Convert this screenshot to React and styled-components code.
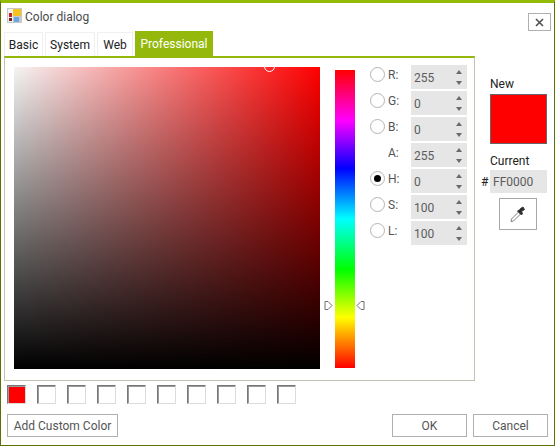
import styled, { createGlobalStyle } from "styled-components";

const GlobalStyle = createGlobalStyle`
   html, body {
      margin: 0;
      padding: 0;
      background: #ffffff;
   }
   * {
      box-sizing: border-box;
   }
`

const Window = styled.div`
   width: 555px;
   height: 446px;
   display: flex;
   flex-direction: column;
   background: #ffffff;
   border: 1px solid #5a7000;
   border-top: 3px solid #94bb06;
   font-family: "Roboto", "Noto Sans", sans-serif;
   font-size: 12px;
   color: #333333;
`

const TitleBar = styled.div`
   height: 28px;
   display: flex;
   align-items: flex-start;
   padding: 5px 3px 0 6px;
`

const TitleText = styled.span`
   margin-left: 3px;
   line-height: 18px;
   color: #4a4a4a;
`

const CloseButton = styled.button`
   width: 23px;
   height: 18px;
   margin: 5px 0 0 auto;
   padding: 0;
   display: flex;
   align-items: center;
   justify-content: center;
   background: #ffffff;
   border: 1px solid #b0b0b0;
`

const Body = styled.div`
   display: flex;
   padding-left: 3px;
`

const MainColumn = styled.div`
   width: 471px;
`

const TabStrip = styled.div`
   height: 25px;
   display: flex;
   align-items: flex-end;
`

const Tab = styled.div`
   width: ${props => props.width}px;
   height: ${props => props.active ? 25 : 24}px;
   margin-right: ${props => props.active ? 0 : 2}px;
   display: flex;
   align-items: center;
   justify-content: center;
   background: ${props => props.active ? "#94b80b" : "#ffffff"};
   color: ${props => props.active ? "#ffffff" : "#222222"};
   border: ${props => props.active ? "none" : "1px solid #f0f0f0"};
   border-bottom: none;
`

const Panel = styled.div`
   height: 325px;
   display: flex;
   align-items: flex-start;
   padding: 7px 0 0 9px;
   border: 1px solid #c2c4b2;
   border-top: 2px solid #94b80b;
`

const SpectrumBox = styled.div`
   position: relative;
   width: 306px;
   height: 302px;
   margin-top: 2px;
   overflow: hidden;
   background: linear-gradient(to bottom, rgba(0, 0, 0, 0), #000000), linear-gradient(to right, #f4f4f4, #ff0000);
`

const SpectrumHandle = styled.div`
   position: absolute;
   left: 250px;
   top: -6px;
   width: 11px;
   height: 11px;
   border: 1px solid #ffffff;
   border-radius: 50%;
`

const HueWrap = styled.div`
   position: relative;
   width: 20px;
   height: 298px;
   margin: 5px 0 0 15px;
`

const HueBar = styled.div`
   width: 100%;
   height: 100%;
   background: linear-gradient(to bottom, #ff0000, #ff00ff 17%, #0000ff 33%, #00ffff 50%, #00ff00 67%, #ffff00 83%, #ff0000);
`

const HueArrow = styled.svg`
   position: absolute;
   top: 230px;
   ${props => props.right ? "right: -10px;" : "left: -11px;"}
`

const Fields = styled.div`
   display: flex;
   flex-direction: column;
   gap: 2px;
   margin-left: 15px;
`

const FieldRow = styled.div`
   display: flex;
   align-items: flex-start;
   height: 24px;
`

const Radio = styled.div`
   width: 15px;
   height: 15px;
   margin-top: 2px;
   display: flex;
   align-items: center;
   justify-content: center;
   background: #ffffff;
   border: 1px solid ${props => props.hidden ? "transparent" : "#b4b4b4"};
   border-radius: 50%;
   visibility: ${props => props.hidden ? "hidden" : "visible"};

   &::after {
      content: "";
      display: ${props => props.checked ? "block" : "none"};
      width: 7px;
      height: 7px;
      border-radius: 50%;
      background: #000000;
   }
`

const FieldLabel = styled.span`
   width: 26px;
   padding-left: 3px;
   line-height: 20px;
   color: #555555;
`

const Spinner = styled.div`
   width: 56px;
   height: 24px;
   display: flex;
   align-items: center;
   justify-content: space-between;
   padding: 1px 5px 0 3px;
   background: #e6e6e6;
   color: #5c5c5c;
`

const SpinArrows = styled.div`
   display: flex;
   flex-direction: column;
   gap: 7px;
`

const ArrowUp = styled.div`
   width: 0;
   height: 0;
   border-left: 3px solid transparent;
   border-right: 3px solid transparent;
   border-bottom: 4px solid #6a6a6a;
`

const ArrowDown = styled(ArrowUp)`
   border-bottom: none;
   border-top: 4px solid #6a6a6a;
`

const SideColumn = styled.div`
   width: 66px;
   margin: 45px 0 0 6px;
   display: flex;
   flex-direction: column;
`

const SideLabel = styled.div`
   margin-left: 9px;
   line-height: 16px;
   color: #222222;
`

const NewColor = styled.div`
   width: 57px;
   height: 50px;
   margin: 2px 0 9px 9px;
   background: #ff0000;
   border: 1px solid #666666;
`

const HexRow = styled.div`
   display: flex;
   align-items: center;
   margin-top: 1px;
`

const Hash = styled.span`
   width: 9px;
   color: #222222;
`

const HexField = styled.div`
   width: 57px;
   height: 23px;
   display: flex;
   align-items: center;
   padding-left: 3px;
   background: #e6e6e6;
   color: #5c5c5c;
`

const PickerButton = styled.button`
   width: 38px;
   height: 32px;
   margin: 5px 0 0 18px;
   padding: 0;
   display: flex;
   align-items: center;
   justify-content: center;
   background: #ffffff;
   border: 1px solid #a8a8a8;
`

const SwatchRow = styled.div`
   display: flex;
   gap: 11px;
   margin: 4px 0 0 6px;
`

const Swatch = styled.div`
   width: 19px;
   height: 19px;
   background: ${props => props.color || "#ffffff"};
   border: 1px solid #dcdcdc;
   border-top: 1px solid #777777;
   border-left: 1px solid #777777;
   box-shadow: inset 1px 1px 0 #9a9a9a;
`

const Footer = styled.div`
   display: flex;
   margin: 10px 0 0 6px;
   padding-right: 6px;
`

const Button = styled.button`
   width: ${props => props.width}px;
   height: 23px;
   margin-left: ${props => props.push ? "auto" : "0"};
   margin-right: ${props => props.gap || 0}px;
   padding: 0;
   background: #ffffff;
   border: 1px solid #b0b0b0;
   font-family: inherit;
   font-size: 12px;
   color: #555555;
`

const AppIcon = () => (
   <svg width="15" height="15" viewBox="0 0 15 15">
      <rect x="0" y="0" width="15" height="15" fill="#c8c8c8" />
      <rect x="1" y="1" width="5" height="13" fill="#f0f0f0" />
      <rect x="2" y="5" width="3" height="4" fill="#c8202a" />
      <rect x="2" y="10" width="3" height="3" fill="#7a2020" />
      <rect x="6" y="1" width="8" height="7" fill="#f6c21c" />
      <rect x="7" y="9" width="5" height="5" fill="#6aa8e0" />
   </svg>
)

const CloseIcon = () => (
   <svg width="9" height="9" viewBox="0 0 9 9">
      <path d="M1 1 L8 8 M8 1 L1 8" stroke="#505050" strokeWidth="1.6" />
   </svg>
)

const Dropper = () => (
   <svg width="18" height="18" viewBox="0 0 18 18">
      <path d="M2 16.5 L2.5 14 L9.5 7 L11.5 9 L4.5 16 Z" fill="#ffffff" stroke="#808080" strokeWidth="1" />
      <path d="M8.5 6 L12.5 10 L13.5 8.5 L12.5 6.5 L15.5 4.5 L14 2 L11.5 3.5 L10.5 5 Z" fill="#2a2a2a" stroke="#3a3a3a" strokeWidth="1" />
   </svg>
)

const Arrow = ({ right }) => (
   <HueArrow right={right} width="9" height="11" viewBox="0 0 9 11">
      {right
         ? <path d="M8 1.5 H5 L1 5.5 L5 9.5 H8 Z" fill="#ffffff" stroke="#707070" />
         : <path d="M1 1.5 H4 L8 5.5 L4 9.5 H1 Z" fill="#ffffff" stroke="#707070" />}
   </HueArrow>
)

const FIELDS = [
   { label: "R:", value: "255" },
   { label: "G:", value: "0" },
   { label: "B:", value: "0" },
   { label: "A:", value: "255", noRadio: true },
   { label: "H:", value: "0", checked: true },
   { label: "S:", value: "100" },
   { label: "L:", value: "100" },
]

const CUSTOM = ["#ff0000", "", "", "", "", "", "", "", "", ""]

export default function App() {
   return (
      <Window>
         <GlobalStyle />
         <TitleBar>
            <AppIcon />
            <TitleText>Color dialog</TitleText>
            <CloseButton><CloseIcon /></CloseButton>
         </TitleBar>
         <Body>
            <MainColumn>
               <TabStrip>
                  <Tab width={39}>Basic</Tab>
                  <Tab width={50}>System</Tab>
                  <Tab width={36}>Web</Tab>
                  <Tab width={78} active>Professional</Tab>
               </TabStrip>
               <Panel>
                  <SpectrumBox>
                     <SpectrumHandle />
                  </SpectrumBox>
                  <HueWrap>
                     <HueBar />
                     <Arrow />
                     <Arrow right />
                  </HueWrap>
                  <Fields>
                     {FIELDS.map(f => (
                        <FieldRow key={f.label}>
                           <Radio hidden={f.noRadio} checked={f.checked} />
                           <FieldLabel>{f.label}</FieldLabel>
                           <Spinner>
                              {f.value}
                              <SpinArrows>
                                 <ArrowUp />
                                 <ArrowDown />
                              </SpinArrows>
                           </Spinner>
                        </FieldRow>
                     ))}
                  </Fields>
               </Panel>
            </MainColumn>
            <SideColumn>
               <SideLabel>New</SideLabel>
               <NewColor />
               <SideLabel>Current</SideLabel>
               <HexRow>
                  <Hash>#</Hash>
                  <HexField>FF0000</HexField>
               </HexRow>
               <PickerButton><Dropper /></PickerButton>
            </SideColumn>
         </Body>
         <SwatchRow>
            {CUSTOM.map((c, i) => <Swatch key={i} color={c} />)}
         </SwatchRow>
         <Footer>
            <Button width={111}>Add Custom Color</Button>
            <Button width={75} push gap={6}>OK</Button>
            <Button width={75}>Cancel</Button>
         </Footer>
      </Window>
   );
}
